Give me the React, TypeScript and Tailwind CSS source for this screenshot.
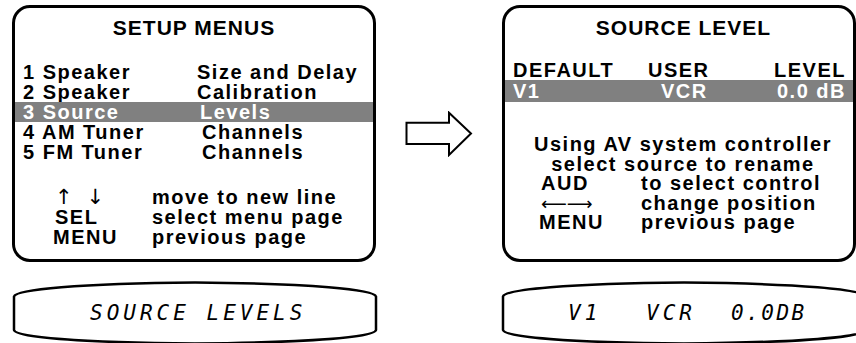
import React from 'react'

const menuRows: [string, string, string, boolean][] = [
  ['1 Speaker', 'Size and Delay', '', false],
  ['2 Speaker', 'Calibration', '', false],
  ['3 Source', 'Levels', 'ml-[3px]', true],
  ['4 AM Tuner', 'Channels', 'ml-[5px]', false],
  ['5 FM Tuner', 'Channels', 'ml-[5px]', false],
]

const BlockArrow = () => (
  <svg width="68" height="46" viewBox="0 0 68 46" className="mt-[106px] ml-[29px] shrink-0">
    <path d="M1.5 11.7 H44 V1.7 L66 22.5 L44 44 V33 H1.5 Z" fill="white" stroke="black" strokeWidth="2" />
  </svg>
)

const LcdBezel = () => (
  <svg width="366" height="64" viewBox="0 0 366 64" className="absolute inset-0">
    <path
      d="M2 15.5 C4 8.5 66 2.5 183 1.5 C300 2.5 362 8.5 364 15.5 L364 49 C362 56 300 61.5 183 62.5 C66 61.5 4 56 2 49 Z"
      fill="white"
      stroke="black"
      strokeWidth="2.5"
    />
  </svg>
)

const lcdText = "italic font-normal font-['DejaVu_Sans_Mono',monospace] text-[21px] leading-none text-black whitespace-pre"

export default function App() {
  return (
    <div className="w-[856px] h-[343px] overflow-hidden bg-white font-['Liberation_Sans',Arial,sans-serif] font-bold text-black">
      <div className="flex items-start pt-[5px] pl-[12px]">
        {/* setup menus screen */}
        <div className="w-[364px] h-[257px] shrink-0 border-[3px] border-black rounded-[18px] flex flex-col">
          <div className="pt-[9px] text-center text-[21px] leading-[21px] tracking-[1px]">SETUP MENUS</div>
          <div className="mt-[24px] flex flex-col text-[20px] leading-[20px] tracking-[1.5px]">
            {menuRows.map(([a, b, off, on]) => (
              <div key={a} className={on ? 'flex h-[20px] bg-[#808080] text-white' : 'flex h-[20px]'}>
                <span className="w-[182px] pl-[8px] shrink-0">{a}</span>
                <span className={off}>{b}</span>
              </div>
            ))}
          </div>
          <div className="mt-[25px] flex flex-col text-[20px] leading-[20px] tracking-[1.5px]">
            <div className="flex h-[20px]">
              <span className="w-[137px] pl-[40px] shrink-0 font-normal font-['DejaVu_Sans',sans-serif] text-[21px] leading-[20px] tracking-normal">
                <span className="mr-[14px]">↑</span>↓
              </span>
              <span>move to new line</span>
            </div>
            <div className="flex h-[20px]">
              <span className="w-[137px] pl-[40px] shrink-0">SEL</span>
              <span>select menu page</span>
            </div>
            <div className="flex h-[20px]">
              <span className="w-[137px] pl-[38px] shrink-0">MENU</span>
              <span>previous page</span>
            </div>
          </div>
        </div>

        <BlockArrow />

        {/* source level screen */}
        <div className="ml-[29px] w-[354px] h-[257px] shrink-0 border-[3px] border-black rounded-[18px] flex flex-col">
          <div className="pt-[9px] pl-[9px] text-center text-[21px] leading-[21px] tracking-[1px]">SOURCE LEVEL</div>
          <div className="mt-[22px] flex h-[20px] text-[20px] leading-[20px] tracking-[1.5px] pl-[8px] pr-[7px]">
            <span className="w-[135px] shrink-0">DEFAULT</span>
            <span className="flex-1">USER</span>
            <span>LEVEL</span>
          </div>
          <div className="flex h-[22px] bg-[#808080] text-white text-[20px] leading-[22px] tracking-[1.5px] pl-[8px] pr-[7px]">
            <span className="w-[148px] shrink-0">V1</span>
            <span className="flex-1">VCR</span>
            <span>0.0 dB</span>
          </div>
          <div className="mt-[33px] flex flex-col text-[20px] leading-[19.5px] tracking-[1.5px]">
            <div className="h-[19.5px] pl-[8px] text-center">Using AV system controller</div>
            <div className="h-[19.5px] pl-[8px] text-center">select source to rename</div>
            <div className="flex h-[19.5px]">
              <span className="w-[136px] pl-[36px] shrink-0">AUD</span>
              <span>to select control</span>
            </div>
            <div className="flex h-[19.5px]">
              <span className="w-[136px] pl-[36px] shrink-0 font-normal font-['DejaVu_Sans',sans-serif] text-[18px] leading-[19.5px] tracking-normal">
                ⟵⟶
              </span>
              <span>change position</span>
            </div>
            <div className="flex h-[19.5px]">
              <span className="w-[136px] pl-[34px] shrink-0">MENU</span>
              <span>previous page</span>
            </div>
          </div>
        </div>
      </div>

      {/* front panel displays */}
      <div className="flex items-start mt-[19px] pl-[12px]">
        <div className="relative w-[366px] h-[64px] shrink-0">
          <LcdBezel />
          <div className="relative flex items-center h-full pl-[78px]">
            <span className={lcdText + ' tracking-[4px]'}>SOURCE LEVELS</span>
          </div>
        </div>
        <div className="relative ml-[123px] w-[366px] h-[64px] shrink-0">
          <LcdBezel />
          <div className="relative flex items-center h-full pl-[67px]">
            <span className={lcdText + ' tracking-[4px] w-[78px]'}>V1</span>
            <span className={lcdText + ' tracking-[4px] w-[85px]'}>VCR</span>
            <span className={lcdText + ' tracking-[2.5px]'}>0.0DB</span>
          </div>
        </div>
      </div>
    </div>
  )
}
